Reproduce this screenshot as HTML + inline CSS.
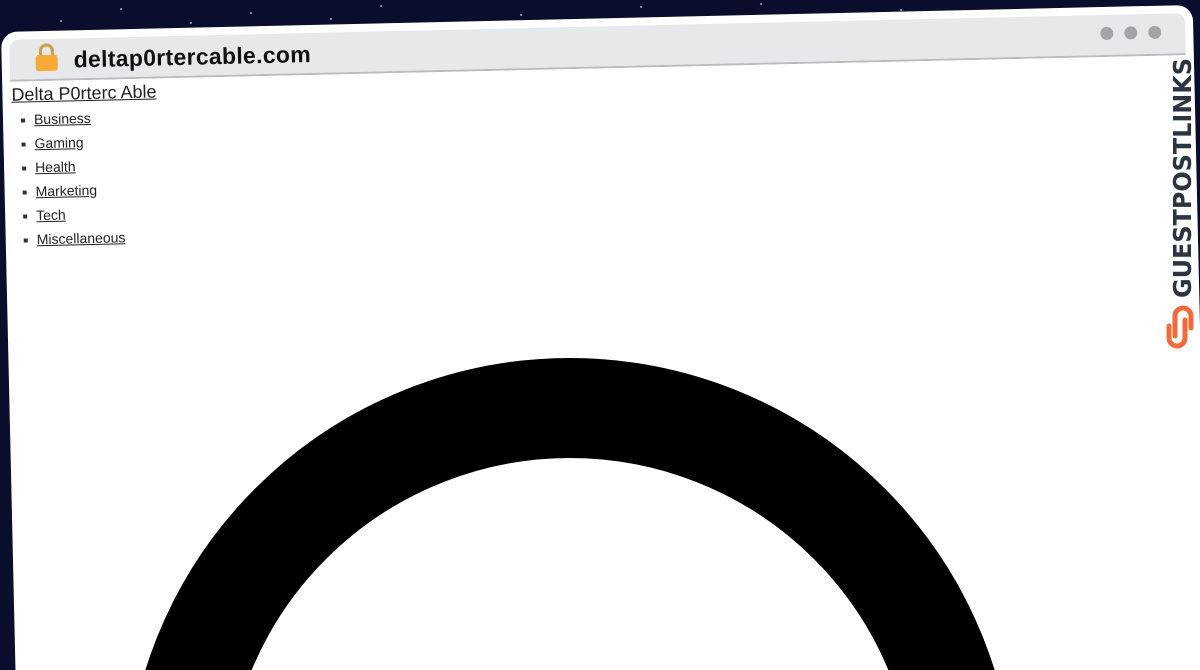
<!DOCTYPE html>
<html><head><meta charset="utf-8"><style>
html,body{margin:0;padding:0;width:1200px;height:670px;overflow:hidden;background:#0a0e2c;font-family:"Liberation Sans",sans-serif}
#wrap{position:relative;width:1200px;height:670px;overflow:hidden}
.star{position:absolute;width:2px;height:2px;background:#cfd6ff;border-radius:50%;opacity:.7}
.win{position:absolute;left:1px;top:32px;width:1192px;height:700px;background:#fff;border-radius:16px;transform:rotate(-1.3deg);transform-origin:0 0;overflow:hidden}
.bar{position:absolute;left:8px;top:8px;right:8px;height:40px;background:#e7e8ea;border-radius:10px 10px 0 0;border-bottom:2px solid #b9bbbf}
.url{position:absolute;left:64px;top:8px;font-size:23px;font-weight:bold;color:#111;letter-spacing:.3px}
.dot{position:absolute;top:12px;width:13px;height:13px;border-radius:50%;background:#a3a5a9}
.content{position:absolute;left:9px;top:50px}
.title{font-size:18px;color:#222;text-decoration:underline;margin-top:3px}
ul{margin:2px 0 0;padding-left:22px;list-style:none;color:#222}
li{height:24px;line-height:24px;font-size:14px;position:relative}
li::before{content:"";position:absolute;left:-13px;top:11px;width:4px;height:4px;background:#333}
li a{color:#222;text-decoration:underline}
</style></head><body><div id="wrap">
<div class="star" style="left:120px;top:8px"></div><div class="star" style="left:250px;top:12px"></div>
<div class="star" style="left:380px;top:5px"></div><div class="star" style="left:520px;top:14px"></div>
<div class="star" style="left:640px;top:6px"></div><div class="star" style="left:760px;top:3px"></div>
<div class="star" style="left:900px;top:9px"></div><div class="star" style="left:60px;top:20px"></div>
<div class="star" style="left:190px;top:22px"></div><div class="star" style="left:330px;top:18px"></div>
<div class="win">
  <div class="bar">
    <svg style="position:absolute;left:25px;top:4px" width="24" height="29" viewBox="0 0 24 29"><path d="M6 13V8a6 6 0 0 1 12 0v5" fill="none" stroke="#c7a24a" stroke-width="3"/><rect x="1" y="12" width="22" height="16" rx="3" fill="#f5ab35"/></svg>
    <div class="url">deltap0rtercable.com</div>
    <div class="dot" style="right:72px"></div><div class="dot" style="right:48px"></div><div class="dot" style="right:24px"></div>
  </div>
  <div class="content">
    <div class="title">Delta P0rterc Able</div>
    <ul>
      <li><a>Business</a></li><li><a>Gaming</a></li><li><a>Health</a></li>
      <li><a>Marketing</a></li><li><a>Tech</a></li><li><a>Miscellaneous</a></li>
    </ul>
  </div>
</div>
<svg style="position:absolute;left:0;top:0" width="1200" height="670">
  <circle cx="570" cy="803" r="395" fill="none" stroke="#000" stroke-width="100"/>
  <g transform="translate(1191,298) rotate(-90)">
    <text x="0" y="0" font-family="DejaVu Sans,Liberation Sans,sans-serif" font-weight="bold" font-size="25" fill="#2c3440" textLength="240" lengthAdjust="spacingAndGlyphs">GUESTPOSTLINKS</text>
  </g>
  <g fill="none" stroke="#f26b3a" stroke-width="5" stroke-linecap="round">
    <path d="M1175 336 v-20 a8 8 0 0 1 16 0 v12"/>
    <path d="M1185 320 v18 a8 8 0 0 1 -16 0 v-12"/>
  </g>
</svg>
</div></body></html>
